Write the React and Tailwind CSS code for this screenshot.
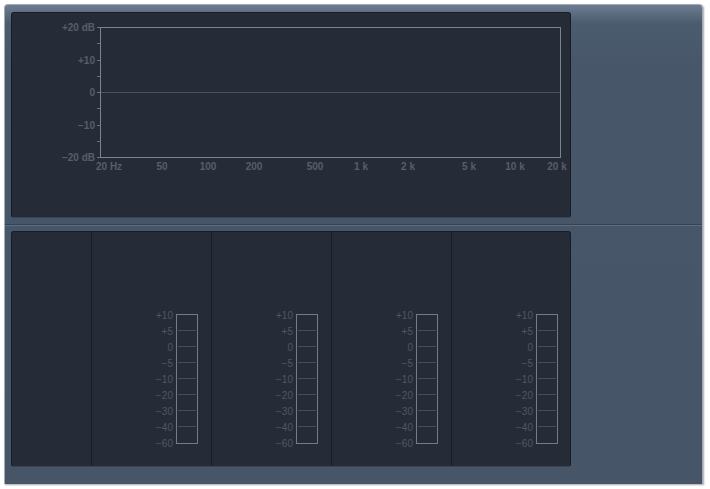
import React from 'react';

const dbTicks = [0, 1, 2, 3, 4, 5, 6, 7, 8];
const dbLabels = [
  { text: '+20 dB', i: 0 },
  { text: '+10', i: 2 },
  { text: '0', i: 4 },
  { text: '\u221210', i: 6 },
  { text: '\u221220 dB', i: 8 },
];
const freqLabels = [
  { text: '50', x: 61 },
  { text: '100', x: 107 },
  { text: '200', x: 153 },
  { text: '500', x: 214 },
  { text: '1 k', x: 260 },
  { text: '2 k', x: 307 },
  { text: '5 k', x: 368 },
  { text: '10 k', x: 414 },
  { text: '20 k', x: 456 },
];
const meterLabels = ['+10', '+5', '0', '\u22125', '\u221210', '\u221220', '\u221230', '\u221240', '\u221260'];

const font = { fontFamily: '"Liberation Sans", Arial, sans-serif' };

const Meter = () => (
  <div className="flex items-start gap-[3px]">
    <div className="flex flex-col -mt-[6px]">
      {meterLabels.map((l) => (
        <div key={l} className="h-4 leading-4 text-right text-[10px] text-[#4f5765]">
          {l}
        </div>
      ))}
    </div>
    <div className="w-[22px] h-[130px] border border-[#747b87] flex flex-col">
      {[0, 1, 2, 3, 4, 5, 6].map((i) => (
        <div key={i} className="h-4 mx-[1px] border-b border-[#464e5b]" />
      ))}
    </div>
  </div>
);

export default function App() {
  return (
    <div className="min-h-screen bg-white pt-[4px] pl-[4px]" style={font}>
      <div className="w-[699px] h-[480px] rounded-t-[4px] border-t border-x border-[#a3abb5] bg-[linear-gradient(to_bottom,#6d7c90_0px,#4c5c6f_18px,#475769_60px,#465668_100%)] shadow-[1px_1px_2px_rgba(0,0,0,0.35)] flex flex-col">
        {/* Graph section */}
        <div className="h-[220px] pt-[7px] pl-[6px] border-b border-[#36424f]">
          <div className="relative w-[560px] h-[206px] rounded-[3px] bg-[#262c37] border border-[#181c23] border-b-[#3a4453] pl-[88px] pt-[14px]">
            <div className="relative w-[461px] h-[131px] border border-[#7b838e]">
              {/* zero line */}
              <div className="absolute left-0 right-0 top-[64px] h-px bg-[#4b5361]" />
              {/* left ticks */}
              {dbTicks.map((t) => (
                <div
                  key={t}
                  className="absolute left-[-4px] w-[3px] h-px bg-[#6b727e]"
                  style={{ top: Math.round(t * 16.25) - 1 }}
                />
              ))}
              {dbLabels.map((l) => (
                <div
                  key={l.text}
                  className="absolute right-[calc(100%+6px)] h-[10px] leading-[10px] whitespace-nowrap text-[10px] font-bold text-[#575e6b]"
                  style={{ top: Math.round(l.i * 16.25) - 5 }}
                >
                  {l.text}
                </div>
              ))}
              <div className="absolute left-[-5px] top-[134px] leading-[10px] whitespace-nowrap text-[10px] font-bold text-[#575e6b]">
                20 Hz
              </div>
              {freqLabels.map((l) => (
                <div
                  key={l.text}
                  className="absolute top-[134px] w-[40px] -ml-[20px] text-center leading-[10px] whitespace-nowrap text-[10px] font-bold text-[#575e6b]"
                  style={{ left: l.x }}
                >
                  {l.text}
                </div>
              ))}
            </div>
          </div>
        </div>

        {/* Meters section */}
        <div className="flex-1 border-t border-[#5d6d80] pt-[5px] pl-[6px]">
          <div className="w-[560px] h-[236px] rounded-[3px] bg-[#262c37] border border-[#181c23] border-b-[#3a4453] flex">
            <div className="w-[79px]" />
            {[0, 1, 2, 3].map((c) => (
              <div
                key={c}
                className={`${c === 3 ? 'w-[119px]' : 'w-[120px]'} border-l border-[#191d24] flex justify-end pt-[82px] ${c === 3 ? 'pr-[12px]' : 'pr-[13px]'}`}
              >
                <Meter />
              </div>
            ))}
          </div>
        </div>
      </div>
    </div>
  );
}
